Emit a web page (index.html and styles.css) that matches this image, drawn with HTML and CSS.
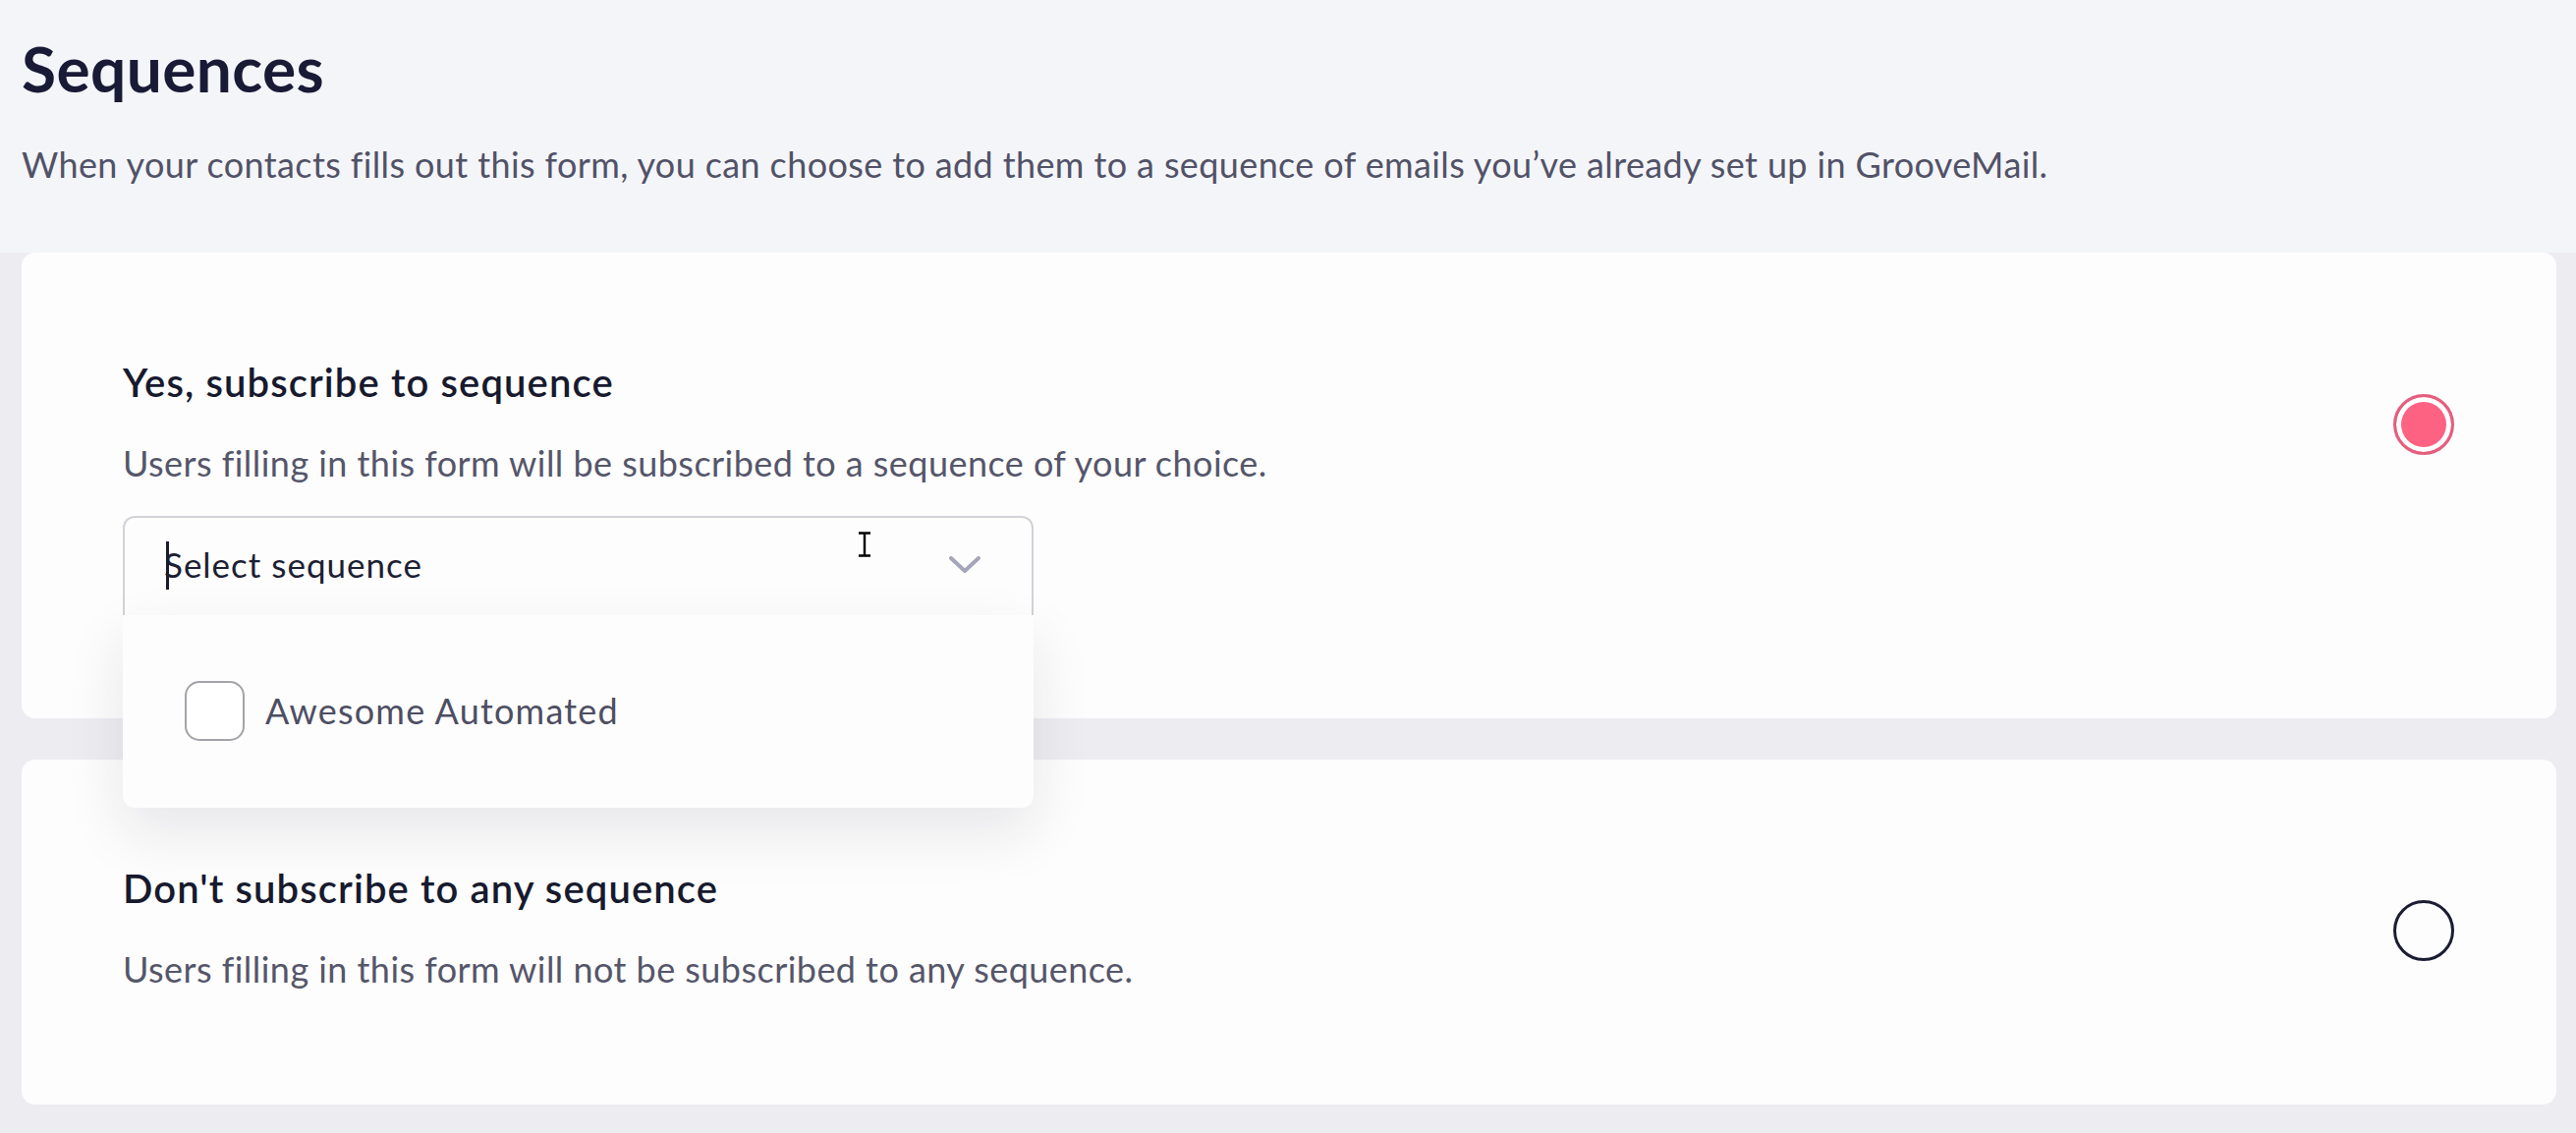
FILE: index.html
```html
<!DOCTYPE html>
<html lang="en">
<head>
<meta charset="utf-8">
<title>Sequences</title>
<link rel="stylesheet" href="styles.css">
</head>
<body>
<main class="page">
  <h1 class="title">Sequences</h1>
  <p class="subtitle">When your contacts fills out this form, you can choose to add them to a sequence of emails you’ve already set up in GrooveMail.</p>

  <div class="options">
    <section class="card card-yes">
      <div class="card-row">
        <div class="card-text">
          <h2 class="card-heading">Yes, subscribe to sequence</h2>
          <p class="card-desc">Users filling in this form will be subscribed to a sequence of your choice.</p>
        </div>
        <span class="radio radio-checked"></span>
      </div>
      <div class="select-wrap">
        <div class="select">
          <span class="select-label">Select sequence</span>
          <svg class="chevron" width="32" height="18" viewBox="0 0 32 18"><path d="M2 2 L16 15 L30 2" fill="none" stroke="#a6a6ba" stroke-width="4" stroke-linecap="round" stroke-linejoin="round"/></svg>
          <span class="text-caret"></span>
          <svg class="mouse-cursor" width="14" height="26" viewBox="0 0 14 26"><path d="M1 1.5 H13 M7 1.5 V24.5 M1 24.5 H13" fill="none" stroke="#000" stroke-width="2.4"/></svg>
        </div>
        <div class="dropdown">
          <label class="option">
            <span class="checkbox"></span>
            <span class="option-label">Awesome Automated</span>
          </label>
        </div>
      </div>
    </section>

    <section class="card card-no">
      <div class="card-row">
        <div class="card-text">
          <h2 class="card-heading">Don't subscribe to any sequence</h2>
          <p class="card-desc">Users filling in this form will not be subscribed to any sequence.</p>
        </div>
        <span class="radio"></span>
      </div>
    </section>
  </div>
</main>
</body>
</html>
```

FILE: styles.css
```css
html, body {
  margin: 0;
  padding: 0;
  height: 100%;
  overflow: hidden;
}

body {
  background: #f4f5f9;
  font-family: "Lato", "Noto Sans", sans-serif;
  line-height: 1.2;
}

.page {
  padding: 32px 20px 0 22px;
}

.title {
  margin: 0;
  font-size: 64px;
  font-weight: 700;
  color: #181a36;
  line-height: 1.2;
  letter-spacing: 0.4px;
}

.subtitle {
  margin: 37px 0 0;
  font-size: 36px;
  letter-spacing: 0.38px;
  color: #515267;
}

.options {
  margin-top: 68px;
  display: flex;
  flex-direction: column;
  gap: 42px;
  position: relative;
}

.options::before {
  content: "";
  position: absolute;
  left: -22px;
  right: -20px;
  top: 0;
  bottom: -40px;
  background: #ededf1;
  z-index: -1;
}

.card {
  background: #fdfdfd;
  border-radius: 14px;
  padding: 0 104px 0 103px;
}

.card-yes {
  padding-top: 108px;
  padding-bottom: 105px;
}

.card-no {
  padding-top: 107px;
  padding-bottom: 116px;
}

.card-row {
  display: flex;
  align-items: center;
  justify-content: space-between;
}

.card-heading {
  margin: 0;
  font-size: 40px;
  font-weight: 600;
  letter-spacing: 1.1px;
  color: #171a2e;
}

.card-desc {
  margin: 37px 0 0;
  font-size: 36px;
  letter-spacing: 0.45px;
  color: #55566a;
}

.radio {
  width: 62px;
  height: 62px;
  box-sizing: border-box;
  border-radius: 50%;
  border: 3px solid #1b1d33;
  background: #fdfdfd;
  flex: none;
  margin-top: 5px;
}

.radio-checked {
  border-color: #e45e7e;
  background: #fd6282;
  box-shadow: inset 0 0 0 5px #fff;
}

.select-wrap {
  position: relative;
  width: 927px;
  margin-top: 32px;
}

.select {
  position: relative;
  display: flex;
  align-items: center;
  justify-content: space-between;
  box-sizing: border-box;
  border: 2px solid #d2d2d8;
  border-bottom: none;
  border-radius: 12px 12px 0 0;
  padding: 26px 52px 31px 40px;
  background: #fdfdfd;
}

.select-label {
  font-size: 35px;
  letter-spacing: 1px;
  color: #1d1f33;
}

.chevron {
  display: block;
  margin-top: 2px;
}

.text-caret {
  position: absolute;
  left: 42px;
  top: 24px;
  width: 3px;
  height: 49px;
  background: #1a1c2c;
}

.mouse-cursor {
  position: absolute;
  left: 746px;
  top: 14px;
}

.dropdown {
  position: absolute;
  left: 0;
  right: 0;
  top: 100%;
  z-index: 2;
  background: #fdfdfd;
  border-radius: 0 0 12px 12px;
  padding: 67px 40px 68px 63px;
  box-shadow: 0 24px 60px rgba(30, 30, 60, 0.10);
}

.option {
  display: flex;
  align-items: center;
  gap: 21px;
}

.checkbox {
  width: 61px;
  height: 61px;
  box-sizing: border-box;
  border: 2px solid #a3a3a8;
  border-radius: 15px;
  background: #fff;
  flex: none;
}

.option-label {
  font-size: 36px;
  letter-spacing: 1.2px;
  color: #4d4e63;
}
```
